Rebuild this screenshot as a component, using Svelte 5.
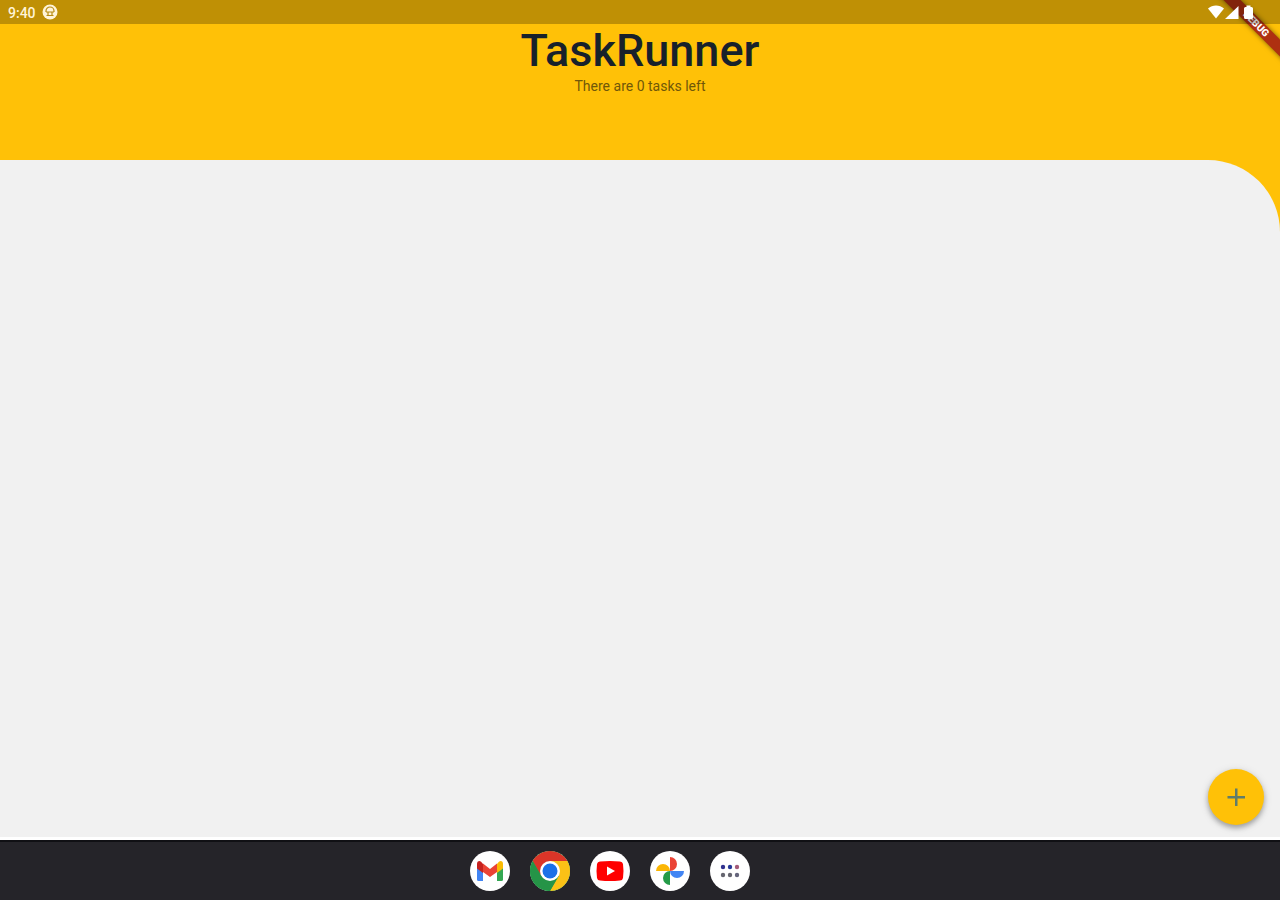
<script>
  let { tasks = [] } = $props();
  const dots = [[5, 8], [12, 8], [19, 8], [5, 16], [12, 16], [19, 16]];
  const dotColors = ['#30318f', '#263a98', '#a45b79', '#65656f', '#65656f', '#65657c'];
</script>

<div class="screen">
  <div class="ribbon-clip"><div class="ribbon">DEBUG</div></div>

  <div class="status">
    <div class="group">
      <time>9:40</time>
      <svg width="16" height="16" viewBox="0 0 16 16" aria-hidden="true">
        <circle cx="8" cy="8" r="7.5" fill="#fff4d8" />
        <path d="M4 8V7a4 4 0 0 1 8 0v1M4 8h8M4.500 11.500h7M6 8v3M10 8v3" fill="none" stroke="#b78b12" stroke-width="1.200" />
      </svg>
    </div>
    <svg width="48" height="16" viewBox="0 0 48 16" fill="#fff" aria-hidden="true">
      <path d="M0 4.500C4.500.5 11.500.5 16 4.500L8 14.500z" />
      <path d="M17 15 30.500 2V15z" />
      <path d="M38.500 1.500h4v1.500h1q1.500 0 1.500 1.500V13.500q0 1.500-1.500 1.500h-6q-1.500 0-1.500-1.500V4.500q0-1.500 1.500-1.500h1z" />
    </svg>
  </div>

  <header>
    <h1>TaskRunner</h1>
    <p>There are {tasks.length} tasks left</p>
  </header>

  <main>
    <button class="add" aria-label="Add task">
      <svg width="24" height="24" viewBox="0 0 24 24" aria-hidden="true">
        <path d="M11 3.500h2.500V11h7.500v2.500h-7.500V21H11v-7.500H3.500V11H11z" fill="#607d6b" />
      </svg>
    </button>
  </main>

  <nav aria-label="Apps">
    <button aria-label="Gmail">
      <svg width="28" height="28" viewBox="0 0 28 28">
        <path d="M1 8v14.500q0 1.500 1.500 1.500H7V12z" fill="#4285f4" />
        <path d="M27 8v14.500q0 1.500-1.500 1.500H21V12z" fill="#34a853" />
        <path d="M21 7v9l6-4.500V7q0-3-2.500-3-1.500 0-3.500 3z" fill="#fbbc04" />
        <path d="M7 7.500 14 13l7-5.500V16l-7 5-7-5z" fill="#ea4335" transform="translate(0 -1)" />
        <path d="M1 7v4.500L7 16V7Q5 4 3.500 4 1 4 1 7z" fill="#c5221f" />
      </svg>
    </button>
    <button aria-label="Chrome">
      <svg width="40" height="40" viewBox="0 0 40 40">
        <circle cx="20" cy="20" r="20" fill="#34a853" />
        <path d="M20 10H37.320A20 20 0 0 1 20 40L28.660 25z" fill="#fbc116" />
        <path d="M20 10H37.320A20 20 0 0 0 2.680 10L11.340 25z" fill="#dc3528" />
        <path d="M2.680 10A20 20 0 0 0 20 40L28.660 25H11.340z" fill="#259447" />
        <circle cx="20" cy="20" r="10" fill="#fff" />
        <circle cx="20" cy="20" r="7.500" fill="#1b70e8" />
      </svg>
    </button>
    <button aria-label="YouTube">
      <svg width="28" height="28" viewBox="0 0 28 28">
        <path d="M4 4.500Q14 3.500 24 4.500 26.500 4.500 27 7q1 7 0 14-.5 2.500-3 2.500-10 1-20 0-2.500 0-3-2.500-1-7 0-14 .5-2.500 3-2.500z" fill="#f00" />
        <path d="M11 9.500v9l8-4.500z" fill="#fff" />
      </svg>
    </button>
    <button aria-label="Photos">
      <svg width="28" height="28" viewBox="0 0 28 28">
        <path d="M14 0a7 7 0 0 1 0 14z" fill="#ea4335" />
        <path d="M28 14a7 7 0 0 1-14 0z" fill="#4285f4" />
        <path d="M14 28a7 7 0 0 1 0-14z" fill="#249b48" />
        <path d="M0 14a7 7 0 0 1 14 0z" fill="#fbb605" />
      </svg>
    </button>
    <button aria-label="All apps">
      <svg width="24" height="24" viewBox="0 0 24 24">
        {#each dots as [x, y], i}
          <circle cx={x} cy={y} r="2.2" fill={dotColors[i]} />
        {/each}
      </svg>
    </button>
  </nav>
</div>

<style>
  :global(body) { margin: 0; }
  .screen {
    position: relative;
    min-height: 100vh;
    display: flex;
    flex-direction: column;
    background: #ffc107;
    font-family: Roboto, sans-serif;
  }
  .ribbon-clip {
    position: absolute;
    top: 0;
    right: 0;
    width: 80px;
    height: 80px;
    overflow: hidden;
    pointer-events: none;
  }
  .ribbon {
    position: absolute;
    top: 18px;
    right: -36px;
    width: 120px;
    transform: rotate(45deg);
    background: #ae3011;
    box-shadow: 0 0 5px #0008;
    color: #fff;
    font-size: 10px;
    font-weight: 900;
    line-height: 12px;
    text-align: center;
  }
  .status {
    position: relative;
    display: flex;
    align-items: center;
    justify-content: space-between;
    height: 24px;
    padding: 0 24px 0 8px;
    background: #00000040;
  }
  .group { display: flex; align-items: center; gap: 6px; }
  time {
    color: #fff4d8;
    font-size: 14px;
    font-weight: 500;
    line-height: 24px;
    padding-top: 2px;
  }
  header {
    display: flex;
    flex-direction: column;
    align-items: center;
    min-height: 136px;
  }
  h1 {
    margin: 0;
    color: #17212b;
    font-size: 45px;
    font-weight: 500;
    line-height: 54px;
  }
  p {
    margin: 0;
    color: #705709;
    font-size: 14px;
    line-height: 16px;
  }
  main {
    flex: 1;
    display: flex;
    align-items: flex-end;
    justify-content: flex-end;
    padding: 0 16px 12px;
    border-bottom: 3px solid #fff;
    border-top-right-radius: 72px;
    background: #f1f1f1;
  }
  button {
    display: grid;
    place-items: center;
    padding: 0;
    border: 0;
    border-radius: 50%;
    background: #fff;
  }
  .add {
    width: 56px;
    height: 56px;
    background: #ffc107;
    box-shadow: 0 3px 5px #0004, 0 2px 10px #0002;
  }
  nav {
    display: flex;
    align-items: center;
    justify-content: center;
    gap: 20px;
    height: 58px;
    padding-right: 60px;
    border-top: 2px solid #101014;
    background: #252429;
  }
  nav button { width: 40px; height: 40px; }
</style>
